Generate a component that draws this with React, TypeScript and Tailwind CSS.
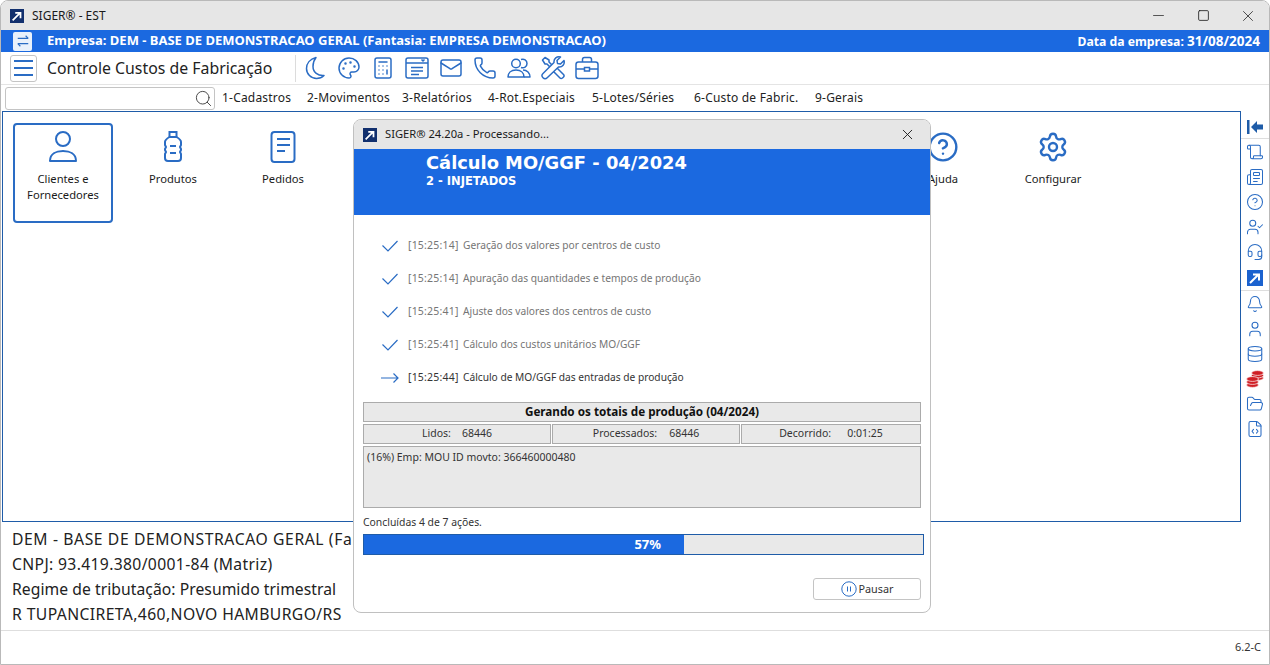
import {
  Bell,
  Calculator,
  CircleHelp,
  Database,
  FileCode,
  FolderOpen,
  Headset,
  Mail,
  Minus,
  Newspaper,
  Palette,
  Phone,
  Scroll,
  Search,
  Settings,
  Square,
  User,
  UserCheck,
  X,
} from "lucide-react";
import type { ReactNode } from "react";

const menu = [
  ["1-Cadastros", "w-[85px]"],
  ["2-Movimentos", "w-[95px]"],
  ["3-Relatórios", "w-[86px]"],
  ["4-Rot.Especiais", "w-[104px]"],
  ["5-Lotes/Séries", "w-[102px]"],
  ["6-Custo de Fabric.", "w-[121px]"],
  ["9-Gerais", "w-[60px]"],
];

const steps = [
  ["[15:25:14]", "Geração dos valores por centros de custo", true],
  ["[15:25:14]", "Apuração das quantidades e tempos de produção", true],
  ["[15:25:41]", "Ajuste dos valores dos centros de custo", true],
  ["[15:25:41]", "Cálculo dos custos unitários MO/GGF", true],
  ["[15:25:44]", "Cálculo de MO/GGF das entradas de produção", false],
] as const;

function AppLogo({ className, fill = "#12306e" }: { className: string; fill?: string }) {
  return (
    <svg viewBox="0 0 16 16" className={className}>
      <rect width="16" height="16" fill={fill} />
      <path d="M3 13 11 5M6 4.500h6v6" fill="none" stroke="#fff" strokeWidth="2" />
    </svg>
  );
}

function PersonIcon() {
  return (
    <svg viewBox="0 0 30 32" className="h-[32px] w-[30px]" fill="none" stroke="#2a6cc4" strokeWidth="2">
      <circle cx="15" cy="8" r="7" />
      <path d="M2 30c0-7 6-10 13-10s13 3 13 10z" strokeLinejoin="round" />
    </svg>
  );
}

function BottleIcon() {
  return (
    <svg viewBox="0 0 20 32" className="h-[32px] w-[20px]" fill="none" stroke="#2a6cc4" strokeWidth="2">
      <rect x="6.500" y="1" width="7" height="5" />
      <path d="M6.500 6C3 8 2 9 2 11v3l1 2-1 2v1l1 2-1 2v4c0 2 1 3 3 3h10c2 0 3-1 3-3v-4l-1-2 1-2v-1l-1-2 1-2v-3c0-2-1-3-4.500-5" />
      <path d="M7 15h6M7 22h6" />
    </svg>
  );
}

function DocIcon() {
  return (
    <svg viewBox="0 0 26 32" className="h-[32px] w-[26px]" fill="none" stroke="#2a6cc4" strokeWidth="2">
      <rect x="1.500" y="1" width="23" height="30" rx="3" />
      <path d="M7 8h13M7 14h13M7 20h8" />
    </svg>
  );
}

const toolIcon = "h-[24px] w-[24px]";

function MoonIcon() {
  return (
    <svg viewBox="0 0 24 24" className={toolIcon} fill="none" stroke="#2a6cc4" strokeWidth="1.500" strokeLinejoin="round">
      <path d="M13 1.500C7 3 3.500 7.500 3.500 12.500c0 5.500 4.500 10 10 10 3 0 5.500-1 7.500-3-6 .5-11-3-11-9 0-3.500 1-6.500 3-9z" />
    </svg>
  );
}

function WindowCardIcon() {
  return (
    <svg viewBox="0 0 24 24" className={toolIcon} fill="none" stroke="#2a6cc4" strokeWidth="1.500">
      <rect x="1" y="2" width="22" height="20" rx="2" />
      <path d="M1 7h22M6 11.500h12M6 15h12M6 18.500h8" />
      <path d="m16.500 3.500 1.500 1.500 1.500-1.500" />
    </svg>
  );
}

function UsersIcon() {
  return (
    <svg viewBox="0 0 24 24" className={toolIcon} fill="none" stroke="#2a6cc4" strokeWidth="1.500" strokeLinejoin="round">
      <circle cx="9" cy="7.500" r="4.300" />
      <path d="M1 21c0-4 3-7 8-7s8 3 8 7z" />
      <path d="M14 3.500c3-1 6 .5 6 4s-3 5-6 4M16 14c4 0 7 3 7 7h-6" />
    </svg>
  );
}

function ToolsIcon() {
  return (
    <svg viewBox="0 0 24 24" className={toolIcon} fill="none" stroke="#2a6cc4" strokeWidth="1.500" strokeLinejoin="round">
      <path d="M1.500 4 4 1.500l4 2.500v2l6 6-2 2-6-6H4z" />
      <path d="m14 13 1.500-1.500 7 7c.8.800.800 1.500 0 2.500l-1 1c-1 .800-1.700.800-2.500 0l-7-7z" />
      <path d="M23 4.500 19.500 8 16.500 7.500 16 4.500l3.500-3.500c-3.500-1-7 1.500-6.500 5.500L2 17.500c-1.800 1.800-1 3.200 0 4.200s2.400 1.800 4.200 0L17.500 11c4 .5 6.500-3 5.500-6.500z" fill="#fff" />
    </svg>
  );
}

function BriefcaseIcon() {
  return (
    <svg viewBox="0 0 24 24" className={toolIcon} fill="none" stroke="#2a6cc4" strokeWidth="1.500">
      <rect x="1" y="6" width="22" height="16.500" rx="2.500" />
      <path d="M7.500 6V3.500C7.500 2.300 8.300 1.500 9.500 1.500h5c1.200 0 2 .8 2 2V6M1 13h8M15 13h8" />
      <rect x="9.500" y="11.500" width="5" height="3.500" />
    </svg>
  );
}

function CoinsIcon() {
  return (
    <svg viewBox="0 0 18 18" className="h-[18px] w-[18px]" fill="#cf1f25" stroke="#fff" strokeWidth="0.700">
      <ellipse cx="11.500" cy="8" rx="6" ry="2.400" />
      <ellipse cx="11.500" cy="5.500" rx="6" ry="2.400" />
      <ellipse cx="11.500" cy="3" rx="6" ry="2.400" />
      <ellipse cx="6.500" cy="15" rx="6" ry="2.400" />
      <ellipse cx="6.500" cy="12" rx="6" ry="2.400" />
      <ellipse cx="6.500" cy="9" rx="6" ry="2.400" />
    </svg>
  );
}

function CollapseIcon() {
  return (
    <svg viewBox="0 0 16 14" className="h-[14px] w-[16px]" fill="#1f5ca8">
      <rect x="0" y="0" width="2.500" height="14" />
      <path d="M4 7 10 1v3.500h6v5h-6V13z" />
    </svg>
  );
}

function HeroItem({ label, icon, selected }: { label?: ReactNode; icon?: ReactNode; selected?: boolean }) {
  return (
    <div
      className={`flex h-[100px] w-[100px] shrink-0 flex-col items-center rounded-[4px] border-2 pt-[6px] text-[11.200px] leading-[16px] text-[#1a1a1a] ${
        selected ? "border-[#2a6cc4]" : "border-transparent"
      }`}
    >
      <div className="flex h-[32px] items-center justify-center">{icon}</div>
      <div className="mt-[8px] text-center">{label}</div>
    </div>
  );
}

function Cell({ children, className }: { children: ReactNode; className: string }) {
  return (
    <div className={`flex items-center justify-center border border-[#ababab] bg-[#e9e9e9] ${className}`}>
      {children}
    </div>
  );
}

function SideTop({ children }: { children: ReactNode }) {
  return <div className="flex h-[25.200px] shrink-0 items-center">{children}</div>;
}

function SideBottom({ children }: { children: ReactNode }) {
  return <div className="flex h-[25px] shrink-0 items-center">{children}</div>;
}

const sideIcon = "h-[18px] w-[18px] text-[#2a6cc4]";

export default function App() {
  return (
    <div className="relative flex h-[665px] w-[1270px] flex-col overflow-hidden rounded-t-[8px] border border-[#b9b9b9] bg-white font-['Noto_Sans','Open_Sans',sans-serif] text-[#1a1a1a]">
      {/* barra de titulo */}
      <div className="flex h-[29px] shrink-0 items-center bg-[#e6e6e6] pl-[9px]">
        <AppLogo className="h-[14px] w-[14px]" />
        <span className="ml-[8px] text-[12px]">SIGER® - EST</span>
        <div className="ml-auto flex items-center">
          <div className="flex w-[45px] justify-center"><Minus className="h-[17px] w-[17px]" strokeWidth={1} /></div>
          <div className="flex w-[45px] justify-center"><Square className="h-[13px] w-[13px] rounded-[2px]" strokeWidth={1.500} /></div>
          <div className="flex w-[43px] justify-center"><X className="h-[18px] w-[18px]" strokeWidth={1} /></div>
        </div>
      </div>

      <div className="flex h-[22px] shrink-0 items-center bg-[#1b69e0] pl-[12px] pr-[9px] font-bold text-white">
        <div className="flex h-[19px] w-[19px] items-center justify-center rounded-[2px] bg-[#e9f1fb]">
          <svg viewBox="0 0 16 16" className="h-[14px] w-[14px]" fill="none" stroke="#2a6cc4" strokeWidth="1.300">
            <path d="M2 5h12M11 2l3 3M14 11H2M5 14l-3-3" />
          </svg>
        </div>
        <span className="ml-[15px] text-[13px]">Empresa: DEM - BASE DE DEMONSTRACAO GERAL (Fantasia: EMPRESA DEMONSTRACAO)</span>
        <span className="ml-auto text-[12.200px]">
          Data da empresa: <span className="text-[13.500px]">31/08/2024</span>
        </span>
      </div>

      {/* toolbar */}
      <div className="flex h-[33px] shrink-0 items-center border-b border-[#e4e4e4] pl-[9px]">
        <div className="flex h-[27px] w-[27px] flex-col items-center justify-center gap-[5px] rounded-[3px] border border-[#c4c4c4]">
          <div className="h-[2px] w-[19px] bg-[#2a6cc4]" />
          <div className="h-[2px] w-[19px] bg-[#2a6cc4]" />
          <div className="h-[2px] w-[19px] bg-[#2a6cc4]" />
        </div>
        <span className="ml-[10px] mt-[1px] w-[248px] text-[15.850px] text-[#222]">Controle Custos de Fabricação</span>
        <div className="h-[27px] w-px bg-[#dcdcdc]" />
        <div className="ml-[7px] flex items-center gap-[10px] text-[#2a6cc4]">
          <MoonIcon />
          <Palette className={toolIcon} strokeWidth={1.500} />
          <Calculator className={toolIcon} strokeWidth={1.500} />
          <WindowCardIcon />
          <Mail className={toolIcon} strokeWidth={1.500} />
          <Phone className={toolIcon} strokeWidth={1.500} />
          <UsersIcon />
          <ToolsIcon />
          <BriefcaseIcon />
        </div>
      </div>

      {/* menu */}
      <div className="flex h-[26px] shrink-0 items-center pl-[4px]">
        <div className="flex h-[23px] w-[210px] items-center justify-end rounded-[3px] border border-[#c4c4c4] pr-[1px]">
          <Search className="h-[19px] w-[19px] text-[#444]" strokeWidth={1.200} />
        </div>
        <div className="ml-[7px] flex text-[12px] tracking-[0.200px] text-[#222]">
          {menu.map(([label, width]) => (
            <span key={label} className={width}>
              {label}
            </span>
          ))}
        </div>
      </div>

      <div className="flex min-h-0 flex-1">
        <div className="flex w-[1240px] flex-col pl-[1px]">
          <div className="flex h-[411px] gap-[10px] border border-[#1f5ca8] pl-[10px] pt-[11px]">
            <HeroItem selected icon={<PersonIcon />} label={<>Clientes e<br />Fornecedores</>} />
            <HeroItem icon={<BottleIcon />} label="Produtos" />
            <HeroItem icon={<DocIcon />} label="Pedidos" />
            <HeroItem />
            <HeroItem />
            <HeroItem />
            <HeroItem />
            <HeroItem />
            <HeroItem icon={<CircleHelp className="h-[32px] w-[32px] text-[#2a6cc4]" strokeWidth={1.800} />} label="Ajuda" />
            <HeroItem icon={<Settings className="h-[32px] w-[32px] text-[#2a6cc4]" strokeWidth={1.800} />} label="Configurar" />
          </div>
          <div className="flex flex-col pl-[10px] pt-[5px] text-[15.700px] leading-[25px] text-[#222]">
            <span className="tracking-[0.600px]">DEM - BASE DE DEMONSTRACAO GERAL (Fantasia: EMPRESA DEMONSTRACAO)</span>
            <span className="tracking-[0.350px]">CNPJ: 93.419.380/0001-84 (Matriz)</span>
            <span className="tracking-[0.050px]">Regime de tributação: Presumido trimestral</span>
            <span className="tracking-[0.400px]">R TUPANCIRETA,460,NOVO HAMBURGO/RS</span>
          </div>
        </div>

        {/* barra lateral */}
        <div className="flex h-[330px] w-[28px] flex-col items-center pt-[4px]">
          <div className="flex h-[23px] shrink-0 items-center"><CollapseIcon /></div>
          <div className="h-px w-full shrink-0 bg-[#dedede]" />
          <SideTop><Scroll className={sideIcon} strokeWidth={1.400} /></SideTop>
          <SideTop><Newspaper className={sideIcon} strokeWidth={1.400} /></SideTop>
          <SideTop><CircleHelp className={sideIcon} strokeWidth={1.400} /></SideTop>
          <SideTop><UserCheck className={sideIcon} strokeWidth={1.400} /></SideTop>
          <SideTop><Headset className={sideIcon} strokeWidth={1.400} /></SideTop>
          <SideTop><AppLogo className="h-[16px] w-[16px]" fill="#1b62cf" /></SideTop>
          <div className="h-px w-full shrink-0 bg-[#dedede]" />
          <SideBottom><Bell className={sideIcon} strokeWidth={1.400} /></SideBottom>
          <SideBottom><User className={sideIcon} strokeWidth={1.400} /></SideBottom>
          <SideBottom><Database className={sideIcon} strokeWidth={1.400} /></SideBottom>
          <SideBottom><CoinsIcon /></SideBottom>
          <SideBottom><FolderOpen className={sideIcon} strokeWidth={1.400} /></SideBottom>
          <SideBottom><FileCode className={sideIcon} strokeWidth={1.400} /></SideBottom>
        </div>
      </div>

      {/* rodape */}
      <div className="flex h-[34px] shrink-0 items-center justify-end border-t border-[#dedede] pr-[8px] text-[11px] text-[#333]">6.2-C</div>

      {/* dialogo */}
      <div className="absolute left-[352px] top-[118px] flex h-[494px] w-[578px] flex-col overflow-hidden rounded-[8px] border border-[#c0c0c0] bg-white">
        <div className="flex h-[29px] shrink-0 items-center bg-[#e6e6e6] pl-[9px] pr-[14px]">
          <AppLogo className="h-[14px] w-[14px]" />
          <span className="ml-[8px] text-[11.200px]">SIGER® 24.20a - Processando...</span>
          <X className="ml-auto h-[17px] w-[17px]" strokeWidth={1.300} />
        </div>
        <div className="flex h-[66px] shrink-0 flex-col bg-[#1b69e0] pl-[72px] pt-[2px] font-['DejaVu_Sans',sans-serif] font-bold text-white">
          <span className="text-[17.850px] leading-[24px]">Cálculo MO/GGF - 04/2024</span>
          <span className="text-[11.500px] leading-[12px]">2 - INJETADOS</span>
        </div>
        <div className="flex shrink-0 flex-col pl-[27px] pt-[14px] text-[10.200px]">
          {steps.map(([time, text, done]) => (
            <div key={text} className="flex h-[33px] items-center">
              <div className="flex w-[27px] items-center">
                {done ? (
                  <svg viewBox="0 0 16 12" className="ml-[1px] h-[12px] w-[16px]" fill="none" stroke="#2a6cc4" strokeWidth="1.200">
                    <path d="M.500 5.500 6 11 15.500 1" />
                  </svg>
                ) : (
                  <svg viewBox="0 0 18 10" className="h-[10px] w-[18px]" fill="none" stroke="#2a6cc4" strokeWidth="1.200">
                    <path d="M0 5h17M12.500.500 17 5l-4.500 4.500" />
                  </svg>
                )}
              </div>
              <span className={`w-[55px] text-[10.500px] tracking-[0.200px] ${done ? "text-[#757575]" : "text-[#333]"}`}>{time}</span>
              <span className={done ? "text-[#757575]" : "text-[#333]"}>{text}</span>
            </div>
          ))}
        </div>
        <div className="flex w-[567px] shrink-0 flex-col gap-[2px] pl-[9px] pt-[8px] text-[10.500px] text-[#333]">
          <Cell className="h-[20px] w-[558px] text-[11.700px] font-bold text-[#111]">Gerando os totais de produção (04/2024)</Cell>
          <div className="flex h-[20px] gap-px">
            <Cell className="w-[188px] gap-[11px]"><span>Lidos:</span><span>68446</span></Cell>
            <Cell className="w-[188px] gap-[12px]"><span>Processados:</span><span>68446</span></Cell>
            <Cell className="w-[180px] gap-[16px]"><span>Decorrido:</span><span>0:01:25</span></Cell>
          </div>
          <div className="h-[62px] w-[558px] border border-[#ababab] bg-[#e9e9e9] pl-[3px] pt-[3px]">(16%) Emp: MOU ID movto: 366460000480</div>
        </div>
        <span className="ml-[9px] mt-[6px] text-[10.400px] leading-[16px] text-[#333]">Concluídas 4 de 7 ações.</span>
        <div className="ml-[9px] mt-[4px] flex h-[21px] w-[561px] overflow-hidden border border-[#1f5ca8] bg-[#e9e9e9]">
          <div className="flex h-full w-[320px] items-center justify-end bg-[#1b69e0] pr-[23px] text-[13px] font-bold text-white">57%</div>
        </div>
        <div className="mr-[9px] mt-[23px] flex h-[22px] w-[108px] items-center justify-center gap-[2px] self-end rounded-[3px] border border-[#c4c4c4] text-[10.800px] text-[#333]">
          <svg viewBox="0 0 16 16" className="h-[16px] w-[16px]" fill="none" stroke="#2a6cc4">
            <circle cx="8" cy="8" r="7.200" />
            <path d="M6.500 5.500v5M9.500 5.500v5" />
          </svg>
          Pausar
        </div>
      </div>
    </div>
  );
}
